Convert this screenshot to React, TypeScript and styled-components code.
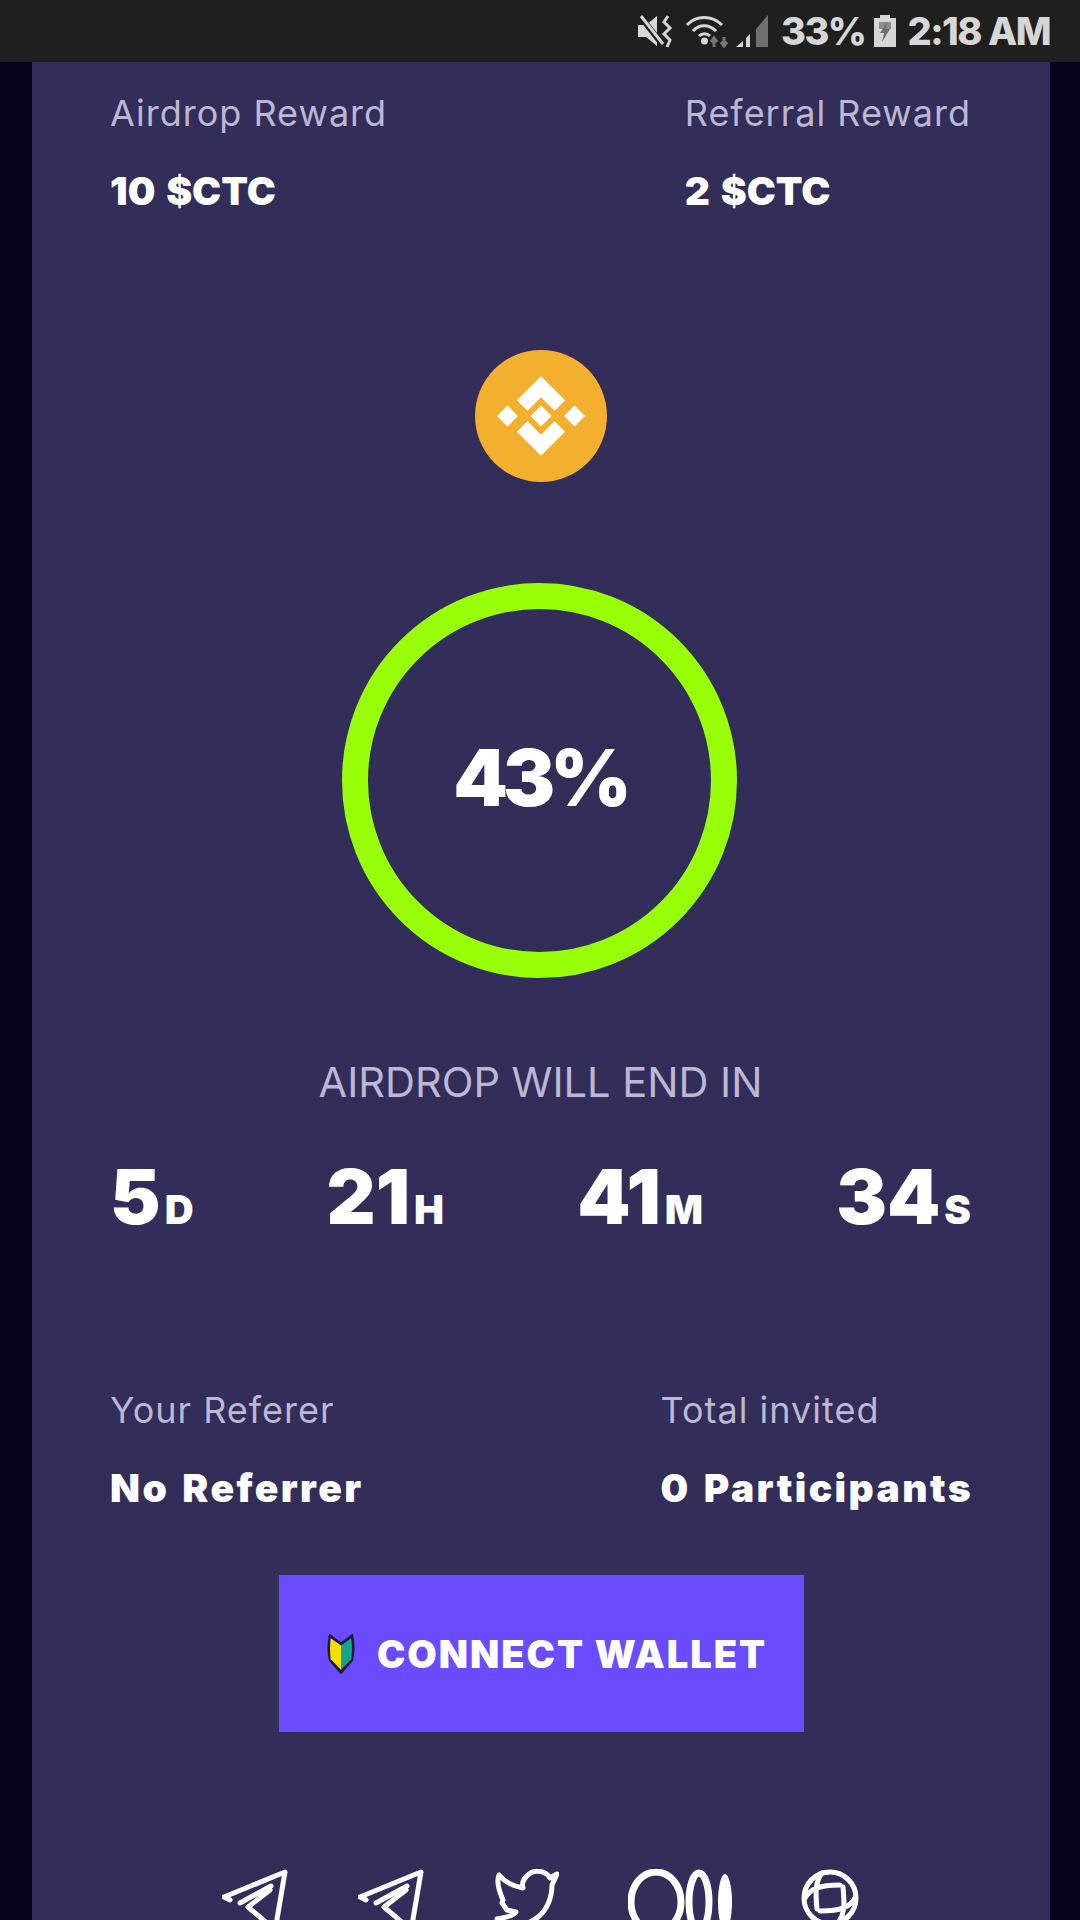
import styled, { createGlobalStyle } from 'styled-components';

const GlobalStyle = createGlobalStyle`
  html, body {
    margin: 0;
    padding: 0;
    background: #06041c;
  }
`;

const displayFont = `'Inter', 'Noto Sans', sans-serif`;
const labelFont = `'Inter', 'Noto Sans', sans-serif`;

const countdown = [
  { value: '5', unit: 'D' },
  { value: '21', unit: 'H' },
  { value: '41', unit: 'M' },
  { value: '34', unit: 'S' },
];

const PlaneIcon = () => (
  <SocialSvg width="67" height="68" viewBox="0 0 67 68">
    <path d="M8 31 L2 28 L63 3 L52 68" />
    <path d="M18 34 L49 17" />
    <path d="M48 21 L26 38 L52 60" />
  </SocialSvg>
);

const BirdIcon = () => (
  <SocialSvg width="65" height="68" viewBox="0 0 65 68">
    <path d="M29 19 C18 17 10 12 5 6 C2 13 5 22 9 31 L8 34 L13 41 L22 43 C20 46 15 48 3 50 C20 60 34 56 44 48 C52 42 58 30 58 16 L63 5 L56 9 C52 2 42 0 35 5 C30 9 27 13 29 19 Z" />
  </SocialSvg>
);

const MediumIcon = () => (
  <SocialSvg width="104" height="68" viewBox="0 0 104 68">
    <MediumRing cx="28" cy="33" rx="25" ry="30" />
    <MediumRing cx="71" cy="33" rx="10" ry="29" />
    <MediumBar cx="97" cy="33" rx="7" ry="28" />
  </SocialSvg>
);

const GlobeIcon = () => (
  <SocialSvg width="59" height="68" viewBox="0 0 59 68">
    <circle cx="29" cy="29" r="26" />
    <path d="M4 29 C9 20 18 16 39 16" />
    <path d="M54 29 C49 38 40 42 19 42" />
    <path d="M21 4 C15 12 14 20 16 40" />
    <path d="M37 54 C43 46 44 38 42 18" />
  </SocialSvg>
);

const MuteIcon = () => (
  <svg width="36" height="34" viewBox="0 0 36 34">
    <path d="M0 11 H8 L19 2 V32 L8 23 H0 Z" fill="#d6d6d6" />
    <path d="M2 2 L24 30" stroke="#1f1f1f" strokeWidth="6" />
    <path d="M3 2 L25 30" stroke="#d6d6d6" strokeWidth="3" />
    <path d="M30 2 L26 8 L32 14 L26 20 L32 26 L29 33" stroke="#d6d6d6" strokeWidth="3" fill="none" />
  </svg>
);

const WifiIcon = () => (
  <svg width="44" height="34" viewBox="0 0 44 34" fill="none" stroke="#d6d6d6" strokeWidth="3">
    <path d="M1 11 C10 1 26 1 36 11" />
    <path d="M7 17 C13 10 23 10 30 17" />
    <path d="M13 22 C16 19 21 19 24 22" />
    <circle cx="18.5" cy="27" r="2" fill="#d6d6d6" />
    <path d="M28 33 V24 M25 28 L28 24 L31 28" stroke="#777" />
    <path d="M38 23 V32 M35 28 L38 32 L41 28" stroke="#777" />
  </svg>
);

const SignalIcon = () => (
  <svg width="32" height="32" viewBox="0 0 32 32">
    <path d="M0 32 L7 26 V32 Z" fill="#d6d6d6" />
    <path d="M10 23 L14 19 V32 H10 Z" fill="#d6d6d6" />
    <path d="M20 14 L32 0 V32 H20 Z" fill="#6f6f6f" />
  </svg>
);

const BatteryIcon = () => (
  <svg width="22" height="32" viewBox="0 0 22 32">
    <path d="M6 0 H16 V3 H22 V32 H0 V3 H6 Z" fill="#d6d6d6" />
    <path d="M5 7 H17 V14 H5 Z" fill="#8a8a8a" />
    <path d="M13 7 L6 18 H10 L8 27 L16 14 H12 Z" fill="#6f6f6f" />
  </svg>
);

export default function App() {
  return (
    <>
      <GlobalStyle />
      <Screen>
        <StatusBar>
          <MuteIcon />
          <StatusGap $size={12} />
          <WifiIcon />
          <StatusGap $size={6} />
          <SignalIcon />
          <StatusGap $size={13} />
          <StatusText>33%</StatusText>
          <StatusGap $size={9} />
          <BatteryIcon />
          <StatusGap $size={11} />
          <StatusText>2:18 AM</StatusText>
        </StatusBar>
        <Panel>
          <StatRow>
            <StatColumn>
              <StatLabel>Airdrop Reward</StatLabel>
              <StatValue>10 $CTC</StatValue>
            </StatColumn>
            <StatColumn>
              <StatLabel>Referral Reward</StatLabel>
              <StatValue>2 $CTC</StatValue>
            </StatColumn>
          </StatRow>

          <CoinBadge>
            <svg width="88" height="88" viewBox="0 0 84 84" fill="#fff">
              <path d="M42 4 L65 27 L55 37 L42 24 L29 37 L19 27 Z" />
              <path d="M42 80 L65 57 L55 47 L42 60 L29 47 L19 57 Z" />
              <path d="M42 32 L52 42 L42 52 L32 42 Z" />
              <path d="M10 32 L20 42 L10 52 L0 42 Z" />
              <path d="M74 32 L84 42 L74 52 L64 42 Z" />
            </svg>
          </CoinBadge>

          <ProgressRing>
            <ProgressText>43%</ProgressText>
          </ProgressRing>

          <EndsLabel>AIRDROP WILL END IN</EndsLabel>
          <Countdown>
            {countdown.map(item => (
              <CountItem key={item.unit}>
                <CountValue>{item.value}</CountValue>
                <CountUnit>{item.unit}</CountUnit>
              </CountItem>
            ))}
          </Countdown>

          <ReferRow>
            <StatColumn>
              <StatLabel>Your Referer</StatLabel>
              <StatValue $wide>No Referrer</StatValue>
            </StatColumn>
            <StatColumn>
              <StatLabel>Total invited</StatLabel>
              <StatValue $wide>0 Participants</StatValue>
            </StatColumn>
          </ReferRow>

          <ConnectButton>
            <svg width="28" height="42" viewBox="0 0 30 40" preserveAspectRatio="none">
              <path d="M3 2 L15 10 L27 2 C29 10 29 18 27 26 L15 38 L3 26 C1 18 1 10 3 2 Z" fill="#1c1c3a" stroke="#1c1c3a" strokeWidth="2" strokeLinejoin="round" />
              <path d="M4 5 L15 12 V35 L4 25 C3 18 3 12 4 5 Z" fill="#f5e000" />
              <path d="M26 5 L15 12 V35 L26 25 C27 18 27 12 26 5 Z" fill="#12a58c" />
            </svg>
            CONNECT WALLET
          </ConnectButton>

          <SocialRow>
            <PlaneIcon />
            <PlaneIcon />
            <BirdIcon />
            <MediumIcon />
            <GlobeIcon />
          </SocialRow>
        </Panel>
      </Screen>
    </>
  );
}

const Screen = styled.div`
  width: 1080px;
  height: 1920px;
  overflow: hidden;
  background: #06041c;
`;

const StatusBar = styled.div`
  height: 62px;
  background: #1f1f1f;
  display: flex;
  align-items: center;
  justify-content: flex-end;
  padding-right: 30px;
`;

const StatusGap = styled.div<{ $size: number }>`
  width: ${props => props.$size}px;
`;

const StatusText = styled.span`
  font-family: ${displayFont};
  font-size: 38px;
  font-weight: 800;
  letter-spacing: -1.5px;
  color: #d6d6d6;
`;

const Panel = styled.div`
  margin: 0 30px 0 32px;
  height: 1858px;
  background: #332d59;
  padding: 0 79px 0 78px;
  box-sizing: border-box;
  display: flex;
  flex-direction: column;
  overflow: hidden;

  > * {
    flex-shrink: 0;
  }
`;

const StatRow = styled.div`
  display: flex;
  justify-content: space-between;
  padding-top: 28px;
`;

const ReferRow = styled(StatRow)`
  padding-top: 0;
  margin: 146px -2px 0 0;
`;

const StatColumn = styled.div`
  display: flex;
  flex-direction: column;
  gap: 32px;
`;

const StatLabel = styled.div`
  font-family: ${labelFont};
  font-size: 36px;
  line-height: 46px;
  letter-spacing: 1px;
  color: #bcb7d2;
`;

const StatValue = styled.div<{ $wide?: boolean }>`
  font-family: ${displayFont};
  font-size: 39px;
  line-height: 46px;
  font-weight: 900;
  word-spacing: 3px;
  letter-spacing: ${props => (props.$wide ? '2.4px' : '0')};
  color: #fff;
`;

const CoinBadge = styled.div`
  width: 132px;
  height: 132px;
  border-radius: 50%;
  background: #f3b02e;
  display: flex;
  align-items: center;
  justify-content: center;
  align-self: center;
  margin-top: 136px;
`;

const ProgressRing = styled.div`
  width: 395px;
  height: 395px;
  box-sizing: border-box;
  border: 26px solid #98ff08;
  border-radius: 50%;
  display: flex;
  align-items: center;
  justify-content: center;
  align-self: center;
  margin: 101px 3px 0 0;
`;

const ProgressText = styled.div`
  font-family: ${displayFont};
  font-size: 78px;
  font-weight: 900;
  letter-spacing: -5px;
  margin: 0 0 6px 2px;
  color: #fff;
`;

const EndsLabel = styled.div`
  font-family: ${labelFont};
  font-size: 41.5px;
  line-height: 50px;
  text-align: center;
  color: #bcb7d2;
  margin-top: 79px;
`;

const Countdown = styled.div`
  display: flex;
  justify-content: space-between;
  margin-top: 44px;
`;

const CountItem = styled.div`
  display: flex;
  align-items: baseline;
  gap: 4px;
`;

const CountValue = styled.span`
  font-family: ${displayFont};
  font-size: 76px;
  line-height: 90px;
  font-weight: 900;
  color: #fff;
`;

const CountUnit = styled.span`
  font-family: ${displayFont};
  font-size: 40px;
  font-weight: 900;
  color: #fff;
`;

const ConnectButton = styled.div`
  width: 525px;
  height: 157px;
  box-sizing: border-box;
  padding-left: 12px;
  align-self: center;
  margin: 64px 0 0 1px;
  background: #6a4bff;
  display: flex;
  align-items: center;
  justify-content: center;
  gap: 22px;
  font-family: ${displayFont};
  font-size: 38px;
  font-weight: 900;
  letter-spacing: 2px;
  color: #fff;
`;

const SocialRow = styled.div`
  display: flex;
  align-items: flex-start;
  gap: 69px;
  margin: 137px 0 0 112px;
`;

const SocialSvg = styled.svg`
  fill: none;
  stroke: #fff;
  stroke-width: 5;
  stroke-linecap: round;
  stroke-linejoin: round;
  flex-shrink: 0;
`;

const MediumRing = styled.ellipse`
  stroke-width: 7;
`;

const MediumBar = styled.ellipse`
  fill: #fff;
  stroke: none;
`;
